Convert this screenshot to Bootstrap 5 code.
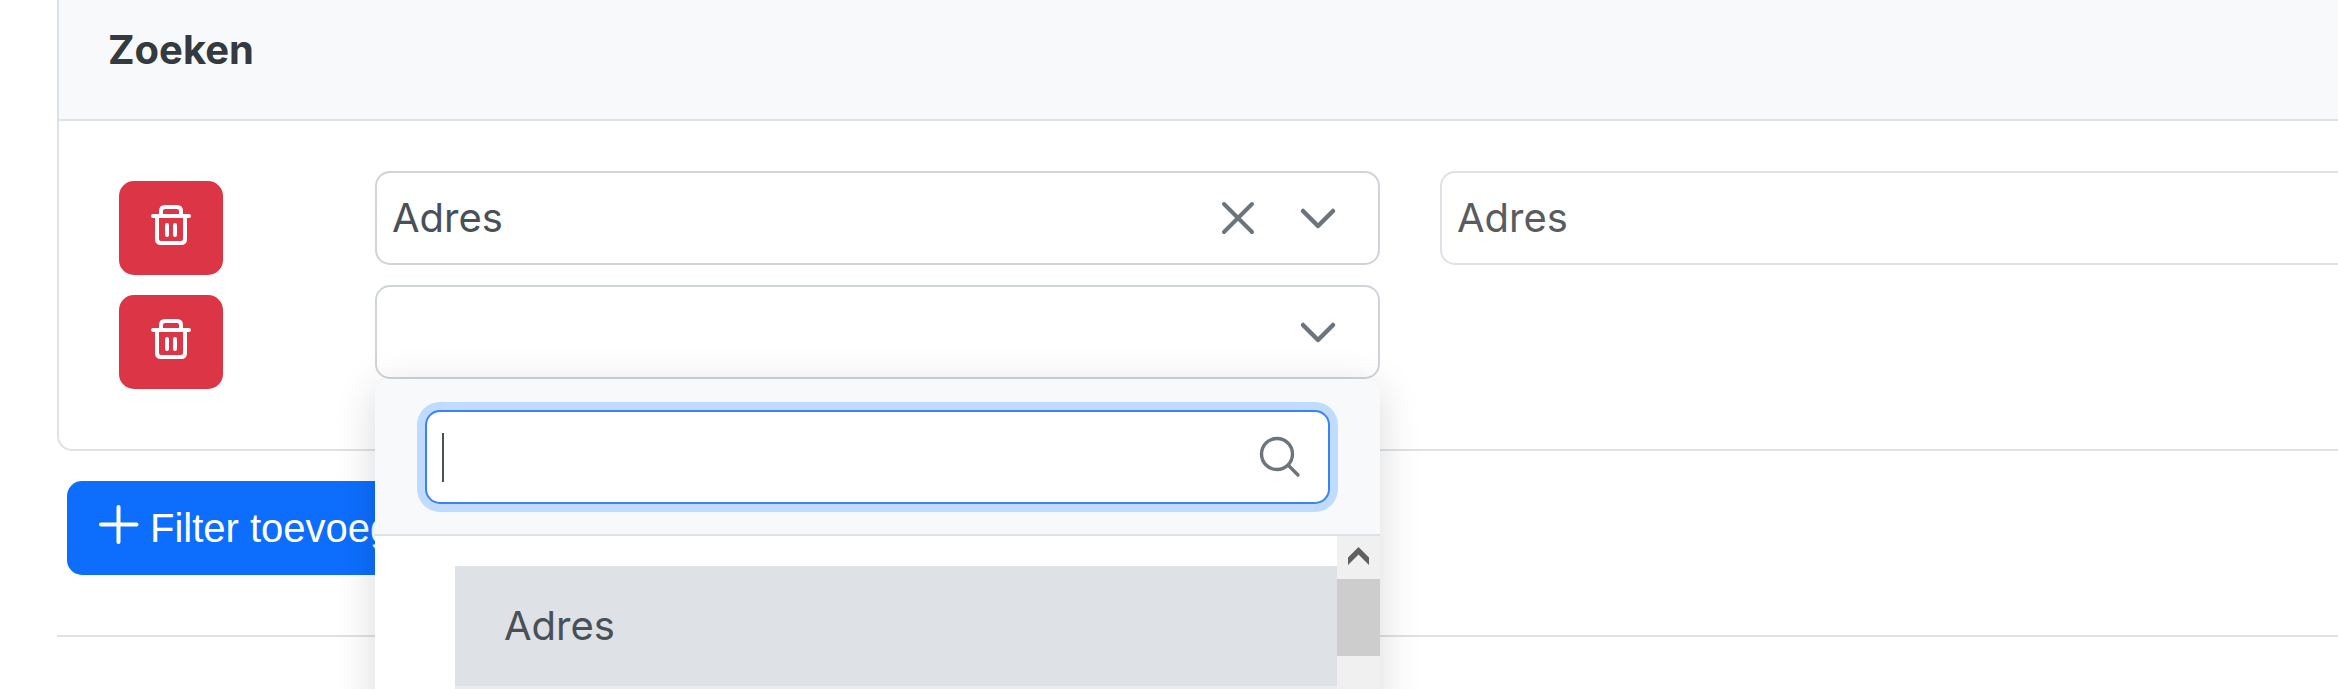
<!DOCTYPE html>
<html lang="nl">
<head>
<meta charset="utf-8">
<title>Zoeken</title>
<link href="https://cdn.jsdelivr.net/npm/bootstrap@5.3.0/dist/css/bootstrap.min.css" rel="stylesheet">
<style>
  html, body { height: 689px; overflow: hidden; }
  body { font: 400 40px/60px Inter, sans-serif; color: #495057; background: #fff; }
  svg { display: block; overflow: visible; fill: none; stroke: currentColor; stroke-linecap: round; stroke-linejoin: round; }
  .search-panel { margin-left: 57px; height: 451px; border: 2px solid #dee2e6; border-width: 0 0 2px 2px; border-radius: 0 0 0 15px; }
  .search-head { height: 121px; padding: 20px 0 0 49px; background: #f8f9fb; border-bottom: 2px solid #dee2e6; color: #343a40; font-size: 40px; }
  .search-body { padding: 50px 0 0 60px; }
  .filters { display: grid; grid-template-columns: 256px 1005px 1fr; row-gap: 10px; }
  .del { width: 104px; height: 94px; margin-top: 10px; border: 0; border-radius: 15px; padding: 0; }
  .del svg { margin-top: 24px; }
  .pick, .value-box, .find-box { height: 94px; border: 2px solid #ced4da; border-radius: 15px; background: #fff; }
  .pick { padding: 0 45px 0 15px; color: #495057; }
  .pick svg, .find-box svg { color: #6c757d; }
  .clear { margin-right: 51px; }
  .value-box { margin-left: 60px; padding-left: 15px; border-color: #dee2e6; border-right: 0; border-radius: 15px 0 0 15px; color: #595c5f; }
  .drop { top: 94px; left: 0; width: 1005px; height: 420px; z-index: 5; background: #fff; border-radius: 15px; box-shadow: 0 8px 40px rgba(0,0,0,.15); overflow: hidden; }
  .drop-head { height: 157px; padding: 31px 50px 0; background: #f8f9fb; border-bottom: 2px solid #dee2e6; }
  .find-box { border-color: #3b82f6; box-shadow: 0 0 0 8px #bfdbfe; padding: 0 28px 0 15px; }
  .caret { width: 2px; height: 49px; background: #495057; }
  .choices { padding: 30px 0 0 80px; }
  .choice { height: 120px; padding-left: 49px; background: #dee2e6; }
  .choice + .choice { background: #e9ecef; }
  .bar { width: 43px; background: #f0f0f0; color: #606060; }
  .bar svg { margin: 11px 0 0 11px; height: 32px; }
  .thumb { height: 77px; background: #cdcdcd; }
  .add { margin: 30px 0 0 67px; width: 412px; height: 94px; padding: 0 0 0 32px; border: 0; border-radius: 15px; background: #0d6efd; font: 40px/60px "Liberation Sans", sans-serif; }
  .add svg { margin: -8px 11px 0 0; }
  .rule { margin: 60px 0 0 57px; border-top: 2px solid #dee2e6; }
</style>
</head>
<body>
<section class="search-panel">
  <header class="search-head fw-bold">Zoeken</header>
  <div class="search-body">
    <div class="filters">
      <button class="btn btn-danger del d-flex justify-content-center" aria-label="Verwijderen">
        <svg width="40" height="41" viewBox="0 0 40 41" stroke-width="4"><path d="M2 11h36M10 10V6q0-4 4-4h12q4 0 4 4v4M6 12v22q0 4 4 4h20q4 0 4-4V12M16 20v10M24 20v10"/></svg>
      </button>
      <div class="pick d-flex align-items-center">
        <span class="flex-grow-1">Adres</span>
        <svg class="clear" width="28" height="28" viewBox="0 0 28 28" stroke-width="4"><path d="M0 0l28 28M28 0L0 28"/></svg>
        <svg width="30" height="15" viewBox="0 0 30 15" stroke-width="4.500"><path d="M0 0l15 15L30 0"/></svg>
      </div>
      <div class="value-box d-flex align-items-center">Adres</div>

      <button class="btn btn-danger del d-flex justify-content-center" aria-label="Verwijderen">
        <svg width="40" height="41" viewBox="0 0 40 41" stroke-width="4"><path d="M2 11h36M10 10V6q0-4 4-4h12q4 0 4 4v4M6 12v22q0 4 4 4h20q4 0 4-4V12M16 20v10M24 20v10"/></svg>
      </button>
      <div class="position-relative">
        <div class="pick d-flex align-items-center justify-content-end">
          <svg width="30" height="15" viewBox="0 0 30 15" stroke-width="4.500"><path d="M0 0l15 15L30 0"/></svg>
        </div>
        <div class="drop position-absolute d-flex flex-column">
          <div class="drop-head flex-shrink-0">
            <div class="find-box d-flex align-items-center justify-content-between">
              <span class="caret"></span>
              <svg width="40" height="40" viewBox="0 0 40 40" stroke-width="3.400"><circle cx="17" cy="17" r="15.500"/><path d="M28.500 28.500l9.500 9.500"/></svg>
            </div>
          </div>
          <div class="d-flex flex-grow-1">
            <div class="choices flex-grow-1">
              <div class="choice d-flex align-items-center">Adres</div>
              <div class="choice"></div>
            </div>
            <div class="bar">
              <svg width="21" height="32" viewBox="0 0 21 32"><path fill="currentColor" stroke="none" d="M10.500 0L21 10.500V18L10.500 7.500 0 18V10.500z"/></svg>
              <div class="thumb"></div>
            </div>
          </div>
        </div>
      </div>
    </div>
  </div>
</section>
<button class="btn btn-primary add d-flex align-items-center">
  <svg width="40" height="40" viewBox="0 0 40 40" stroke-width="4"><path d="M2 20.500h35.500M19.500 3v35"/></svg>
  <span>Filter toevoegen</span>
</button>
<div class="rule"></div>
</body>
</html>
